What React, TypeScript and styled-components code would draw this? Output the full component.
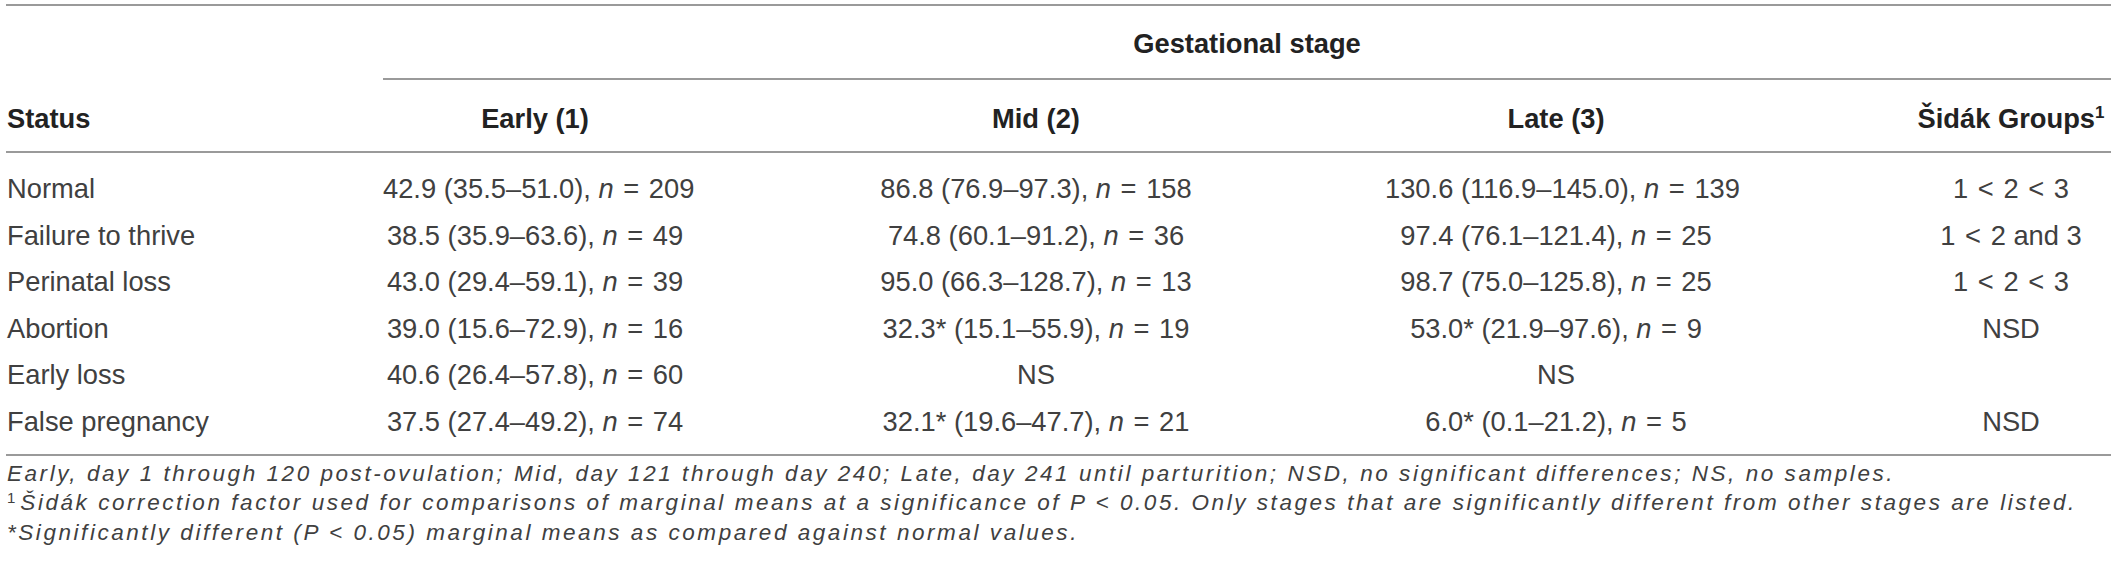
import styled, { createGlobalStyle } from "styled-components";

interface Estimate {
  mean: string;
  star?: boolean;
  ci: string;
  n: number;
}

interface StatusRow {
  status: string;
  early: Estimate | null;
  mid: Estimate | null;
  late: Estimate | null;
  sidak: string[];
}

const rows: StatusRow[] = [
  {
    status: "Normal",
    early: { mean: "42.9", ci: "35.5–51.0", n: 209 },
    mid: { mean: "86.8", ci: "76.9–97.3", n: 158 },
    late: { mean: "130.6", ci: "116.9–145.0", n: 139 },
    sidak: ["1", "2", "3"],
  },
  {
    status: "Failure to thrive",
    early: { mean: "38.5", ci: "35.9–63.6", n: 49 },
    mid: { mean: "74.8", ci: "60.1–91.2", n: 36 },
    late: { mean: "97.4", ci: "76.1–121.4", n: 25 },
    sidak: ["1", "2 and 3"],
  },
  {
    status: "Perinatal loss",
    early: { mean: "43.0", ci: "29.4–59.1", n: 39 },
    mid: { mean: "95.0", ci: "66.3–128.7", n: 13 },
    late: { mean: "98.7", ci: "75.0–125.8", n: 25 },
    sidak: ["1", "2", "3"],
  },
  {
    status: "Abortion",
    early: { mean: "39.0", ci: "15.6–72.9", n: 16 },
    mid: { mean: "32.3", star: true, ci: "15.1–55.9", n: 19 },
    late: { mean: "53.0", star: true, ci: "21.9–97.6", n: 9 },
    sidak: ["NSD"],
  },
  {
    status: "Early loss",
    early: { mean: "40.6", ci: "26.4–57.8", n: 60 },
    mid: null,
    late: null,
    sidak: [],
  },
  {
    status: "False pregnancy",
    early: { mean: "37.5", ci: "27.4–49.2", n: 74 },
    mid: { mean: "32.1", star: true, ci: "19.6–47.7", n: 21 },
    late: { mean: "6.0", star: true, ci: "0.1–21.2", n: 5 },
    sidak: ["NSD"],
  },
];

const GlobalStyle = createGlobalStyle`
  body {
    margin: 0;
    background: #ffffff;
    font-family: "Liberation Sans", Arial, Helvetica, sans-serif;
    color: #404040;
  }
`;

const renderEstimate = (value: Estimate | null) => {
  if (!value) return "NS";
  return (
    <>
      {value.mean}
      {value.star && "*"} ({value.ci}), <Var>n</Var> <Op>=</Op> {value.n}
    </>
  );
};

// groups are joined by "<" with a little math spacing
const renderGroups = (parts: string[]) =>
  parts.map((part, i) => (
    <span key={i}>
      {i > 0 && (
        <>
          {" "}
          <Op>&lt;</Op>{" "}
        </>
      )}
      {part}
    </span>
  ));

export default function App() {
  return (
    <>
      <GlobalStyle />
      <Wrapper>
        <Table>
          <GroupRow>
            <GroupCell>Gestational stage</GroupCell>
          </GroupRow>
          <HeadRow>
            <HeadCell $align="left">Status</HeadCell>
            <HeadCell>Early (1)</HeadCell>
            <HeadCell>Mid (2)</HeadCell>
            <HeadCell>Late (3)</HeadCell>
            <HeadCell $sidak>
              Šidák Groups<Sup>1</Sup>
            </HeadCell>
          </HeadRow>
          <Body>
            {rows.map((row) => (
              <Row key={row.status}>
                <Cell $align="left">{row.status}</Cell>
                <Cell>{renderEstimate(row.early)}</Cell>
                <Cell>{renderEstimate(row.mid)}</Cell>
                <Cell>{renderEstimate(row.late)}</Cell>
                <Cell $sidak>{renderGroups(row.sidak)}</Cell>
              </Row>
            ))}
          </Body>
        </Table>
        <Notes>
          <Note>
            Early, day 1 through 120 post-ovulation; Mid, day 121 through day
            240; Late, day 241 until parturition; NSD, no significant
            differences; NS, no samples.
          </Note>
          <Note>
            <NoteSup>1</NoteSup>Šidák correction factor used for comparisons of
            marginal means at a significance of P &lt; 0.05. Only stages that
            are significantly different from other stages are listed.
          </Note>
          <Note>
            *Significantly different (P &lt; 0.05) marginal means as compared
            against normal values.
          </Note>
        </Notes>
      </Wrapper>
    </>
  );
}

const columns = "377px 304px 698px 342px 384px";

const Wrapper = styled.div`
  width: 2105px;
  margin: 4px 0 0 6px;
`;

const Table = styled.div`
  border-top: 2px solid #9a9a9a;
  border-bottom: 2px solid #9a9a9a;
  font-size: 27.3px;
  line-height: 31px;
`;

const GroupRow = styled.div`
  display: grid;
  grid-template-columns: ${columns};
  height: 74px;
`;

const GroupCell = styled.div`
  grid-column: 2 / -1;
  display: flex;
  align-items: center;
  justify-content: center;
  padding-top: 2px;
  border-bottom: 2px solid #9a9a9a;
  font-weight: 700;
  color: #222222;
`;

const HeadRow = styled.div`
  display: grid;
  grid-template-columns: ${columns};
  align-items: end;
  height: 73px;
  padding-bottom: 17px;
  box-sizing: border-box;
  border-bottom: 2px solid #9a9a9a;
`;

const HeadCell = styled.div<{ $align?: "left" | "center"; $sidak?: boolean }>`
  text-align: ${({ $align }) => $align ?? "center"};
  padding-left: ${({ $align, $sidak }) =>
    $sidak ? "184px" : $align === "left" ? "1px" : "0"};
  font-weight: 700;
  color: #222222;
  white-space: nowrap;
`;

const Sup = styled.sup`
  font-size: 17px;
  line-height: 0;
  vertical-align: 10px;
`;

const Body = styled.div`
  padding: 12.4px 0 10px;
`;

const Row = styled.div`
  display: grid;
  grid-template-columns: ${columns};
  align-items: center;
  height: 46.5px;
`;

const Cell = styled.div<{ $align?: "left" | "center"; $sidak?: boolean }>`
  text-align: ${({ $align }) => $align ?? "center"};
  padding-left: ${({ $align, $sidak }) =>
    $sidak ? "184px" : $align === "left" ? "1px" : "0"};
  white-space: nowrap;
`;

const Var = styled.i`
  font-style: italic;
`;

const Op = styled.span`
  margin: 0 2px;
`;

const Notes = styled.div`
  padding: 2.6px 0 0 1px;
  font-size: 22.5px;
  line-height: 29.5px;
  letter-spacing: 2.55px;
  font-style: italic;
  color: #404040;
`;

const Note = styled.p`
  margin: 0;
  white-space: nowrap;
`;

const NoteSup = styled.span`
  font-style: normal;
  font-size: 15px;
  letter-spacing: 0;
  vertical-align: 7px;
  line-height: 0;
  margin-right: 5px;
`;
